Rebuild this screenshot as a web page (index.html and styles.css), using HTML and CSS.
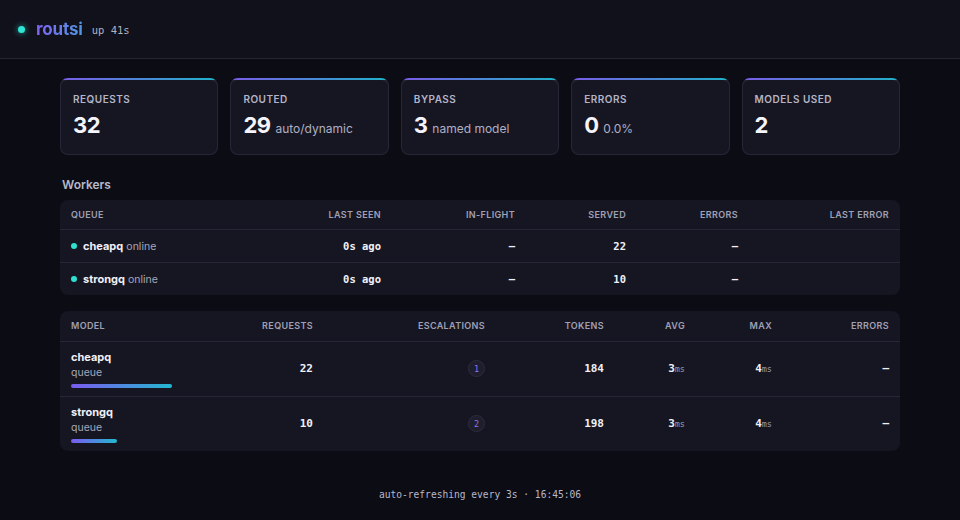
FILE: index.html
```
<!DOCTYPE html>
<html lang="en">
<head>
    <meta charset="UTF-8">
    <meta name="viewport" content="width=device-width, initial-scale=1.0">
    <title>routsi</title>
    <link rel="stylesheet" href="styles.css">
</head>
<body>
<header class="topbar">
    <span class="pulse"></span>
    <span class="brand">routsi</span>
    <span class="uptime">up 41s</span>
</header>

<main class="wrap">
    <div class="stats">
        <div class="stat">
            <div class="label">Requests</div>
            <div class="value">32</div>
        </div>
        <div class="stat">
            <div class="label">Routed</div>
            <div class="value">29 <small>auto/dynamic</small></div>
        </div>
        <div class="stat">
            <div class="label">Bypass</div>
            <div class="value">3 <small>named model</small></div>
        </div>
        <div class="stat">
            <div class="label">Errors</div>
            <div class="value">0 <small>0.0%</small></div>
        </div>
        <div class="stat">
            <div class="label">Models used</div>
            <div class="value">2</div>
        </div>
    </div>

    <h3 class="section-title">Workers</h3>
    <div class="panel">
        <table class="grid workers">
            <colgroup>
                <col style="width:200px"><col style="width:132px"><col style="width:134px">
                <col style="width:111px"><col style="width:112px"><col style="width:151px">
            </colgroup>
            <thead>
                <tr>
                    <th class="left">Queue</th>
                    <th>Last seen</th>
                    <th>In-flight</th>
                    <th>Served</th>
                    <th>Errors</th>
                    <th>Last error</th>
                </tr>
            </thead>
            <tbody>
                <tr>
                    <td class="left"><span class="dot"></span><b>cheapq</b> <span class="muted">online</span></td>
                    <td class="mono">0s ago</td>
                    <td class="mono">–</td>
                    <td class="mono">22</td>
                    <td class="mono">–</td>
                    <td></td>
                </tr>
                <tr>
                    <td class="left"><span class="dot"></span><b>strongq</b> <span class="muted">online</span></td>
                    <td class="mono">0s ago</td>
                    <td class="mono">–</td>
                    <td class="mono">10</td>
                    <td class="mono">–</td>
                    <td></td>
                </tr>
            </tbody>
        </table>
    </div>

    <div class="panel">
        <table class="grid models">
            <colgroup>
                <col style="width:130px"><col style="width:134px"><col style="width:172px">
                <col style="width:119px"><col style="width:81px"><col style="width:87px"><col style="width:117px">
            </colgroup>
            <thead>
                <tr>
                    <th class="left">Model</th>
                    <th>Requests</th>
                    <th>Escalations</th>
                    <th>Tokens</th>
                    <th>Avg</th>
                    <th>Max</th>
                    <th>Errors</th>
                </tr>
            </thead>
            <tbody>
                <tr>
                    <td class="left">
                        <div class="model-name">cheapq</div>
                        <div class="muted">queue</div>
                        <div class="bar" style="width:101px"></div>
                    </td>
                    <td class="mono">22</td>
                    <td><span class="badge">1</span></td>
                    <td class="mono">184</td>
                    <td class="mono">3<span class="unit">ms</span></td>
                    <td class="mono">4<span class="unit">ms</span></td>
                    <td class="mono">–</td>
                </tr>
                <tr>
                    <td class="left">
                        <div class="model-name">strongq</div>
                        <div class="muted">queue</div>
                        <div class="bar" style="width:46px"></div>
                    </td>
                    <td class="mono">10</td>
                    <td><span class="badge">2</span></td>
                    <td class="mono">198</td>
                    <td class="mono">3<span class="unit">ms</span></td>
                    <td class="mono">4<span class="unit">ms</span></td>
                    <td class="mono">–</td>
                </tr>
            </tbody>
        </table>
    </div>

    <footer class="foot">auto-refreshing every 3s · 16:45:06</footer>
</main>
</body>
</html>
```

FILE: styles.css
```
* {
    margin: 0;
    padding: 0;
    box-sizing: border-box;
}

body {
    background: #0c0c15;
    color: #e8e8f0;
    font-family: 'Inter', 'Liberation Sans', sans-serif;
    font-size: 11px;
    min-height: 100vh;
}

.topbar {
    height: 59px;
    display: flex;
    align-items: center;
    padding: 0 18px;
    background: #11111b;
    border-bottom: 1px solid #242432;
}

.pulse {
    width: 7px;
    height: 7px;
    border-radius: 50%;
    background: #2ee6d6;
    box-shadow: 0 0 6px rgba(46, 230, 214, 0.7);
    margin-right: 11px;
}

.brand {
    font-size: 17px;
    font-weight: 700;
    background: linear-gradient(90deg, #7f62f2, #4f97e0);
    -webkit-background-clip: text;
    background-clip: text;
    color: transparent;
    margin-right: 9px;
    letter-spacing: -0.01em;
}

.uptime {
    font-family: 'DejaVu Sans Mono', monospace;
    font-size: 10.5px;
    color: #b0b0c0;
    padding-top: 2px;
}

.wrap {
    width: 840px;
    margin: 0 auto;
    padding-top: 19px;
}

.stats {
    display: grid;
    grid-template-columns: repeat(5, 1fr);
    gap: 12px;
}

.stat {
    height: 77px;
    border: 1px solid transparent;
    border-top-width: 2px;
    border-radius: 8px;
    padding: 13px 12px;
    background:
        linear-gradient(#161622, #161622) padding-box,
        linear-gradient(90deg, #7a5be8, #1fb3c9) top / 100% 2px no-repeat border-box,
        linear-gradient(#262636, #262636) border-box;
}

.stat .label {
    font-size: 10px;
    font-weight: 600;
    letter-spacing: 0.05em;
    text-transform: uppercase;
    color: #b4b4c6;
}

.stat .value {
    margin-top: 7px;
    font-size: 22px;
    font-weight: 700;
    color: #f4f4fa;
    letter-spacing: -0.02em;
}

.stat .value small {
    font-size: 12px;
    font-weight: 400;
    color: #b0b0c2;
    letter-spacing: 0;
}

.section-title {
    font-size: 12px;
    font-weight: 600;
    color: #b8b8c8;
    margin: 22px 0 8px 2px;
}

.panel {
    background: #161622;
    border-radius: 8px;
    overflow: hidden;
    margin-bottom: 16px;
}

.grid {
    width: 100%;
    border-collapse: collapse;
    table-layout: fixed;
}

.grid th {
    height: 29px;
    padding: 0 11px;
    font-size: 9px;
    font-weight: 600;
    letter-spacing: 0.04em;
    text-transform: uppercase;
    color: #a0a0b4;
    text-align: right;
    border-bottom: 1px solid #262636;
}

.grid td {
    padding: 0 11px;
    text-align: right;
    font-size: 11px;
    color: #f0f0f6;
}

.grid .left {
    text-align: left;
}

.workers td {
    height: 33px;
}

.workers tbody tr + tr td {
    border-top: 1px solid #262636;
}

.models th {
    height: 30px;
}

.models td {
    height: 55px;
}

.models tbody tr + tr td {
    border-top: 1px solid #262636;
}

.mono {
    font-family: 'DejaVu Sans Mono', monospace;
    font-weight: 700;
}

.workers .mono {
    font-size: 10.5px;
}

.dot {
    display: inline-block;
    width: 6px;
    height: 6px;
    border-radius: 50%;
    background: #2ee0d0;
    margin-right: 6px;
    vertical-align: 1px;
}

.grid b {
    font-weight: 700;
}

.muted {
    color: #a6a6b8;
    font-weight: 400;
    font-size: 10.5px;
}

.model-name {
    font-weight: 700;
    margin-bottom: 2px;
}

.bar {
    height: 4px;
    border-radius: 2px;
    margin-top: 5px;
    background: linear-gradient(90deg, #7a5bf0, #22b8cf);
}

.badge {
    display: inline-flex;
    align-items: center;
    justify-content: center;
    width: 17px;
    height: 17px;
    border-radius: 50%;
    background: #1e1e2c;
    border: 1px solid #2c2c3e;
    color: #8c74ee;
    font-family: 'DejaVu Sans Mono', monospace;
    font-size: 8.5px;
}

.unit {
    font-size: 8.5px;
    font-weight: 400;
    color: #9c9cb0;
}

.foot {
    margin-top: 38px;
    text-align: center;
    font-family: 'DejaVu Sans Mono', monospace;
    font-size: 9.6px;
    color: #b8b8c8;
}
```
